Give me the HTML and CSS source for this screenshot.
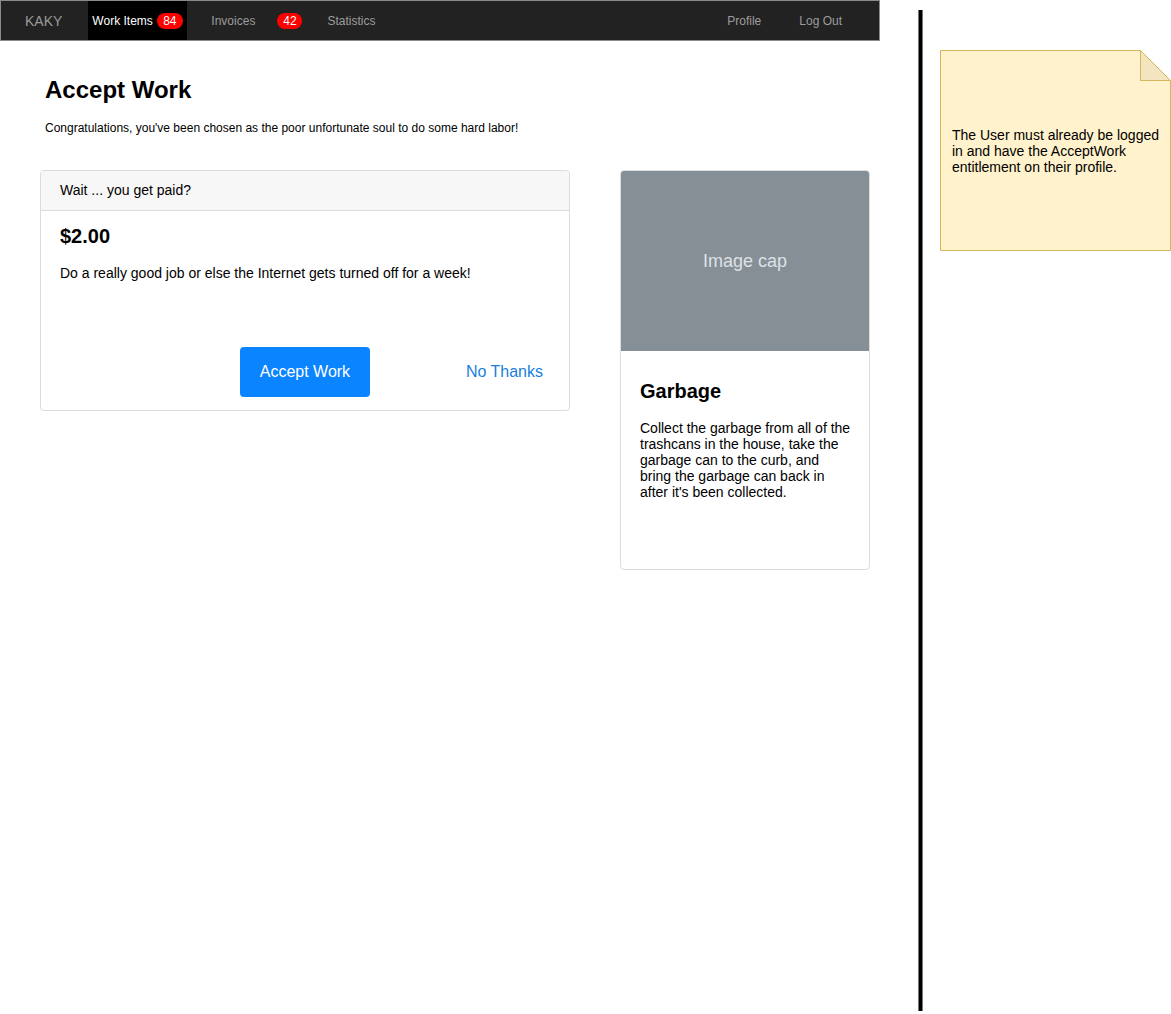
FILE: index.html
```html
<!DOCTYPE html>
<html>
<head>
<meta charset="utf-8">
<link rel="stylesheet" href="styles.css">
</head>
<body>
<div class="page">
  <div class="main">
    <nav class="navbar">
      <span class="brand">KAKY</span>
      <span class="nav-item active">Work Items <span class="badge">84</span></span>
      <span class="nav-item invoices">Invoices</span>
      <span class="badge badge-42">42</span>
      <span class="nav-item stats">Statistics</span>
      <span class="nav-spacer"></span>
      <span class="nav-item profile">Profile</span>
      <span class="nav-item logout">Log Out</span>
    </nav>
    <header class="page-head">
      <h1>Accept Work</h1>
      <p>Congratulations, you've been chosen as the poor unfortunate soul to do some hard labor!</p>
    </header>
    <div class="cards">
      <section class="card card-offer">
        <div class="card-header">Wait ... you get paid?</div>
        <div class="card-body">
          <h2>$2.00</h2>
          <p>Do a really good job or else the Internet gets turned off for a week!</p>
          <div class="actions">
            <button class="btn-primary">Accept Work</button>
            <button class="btn-link">No Thanks</button>
          </div>
        </div>
      </section>
      <section class="card card-task">
        <div class="img-cap">Image cap</div>
        <div class="task-body">
          <h2>Garbage</h2>
          <p>Collect the garbage from all of the trashcans in the house, take the garbage can to the curb, and<br>bring the garbage can back in<br>after it's been collected.</p>
        </div>
      </section>
    </div>
  </div>
  <div class="divider"></div>
  <div class="note">
    <svg class="note-shape" width="231" height="201" viewBox="0 0 231 201">
      <path d="M0.5 0.5 H200.5 L230.5 30.5 V200.5 H0.5 Z" fill="#fff2cc" stroke="#d6b656"/>
      <path d="M200.5 0.5 V30.5 H230.5 Z" fill="#f2e5c0" stroke="#d6b656"/>
    </svg>
    <p class="note-text">The User must already be logged in and have the AcceptWork entitlement on their profile.</p>
  </div>
</div>
</body>
</html>
```
FILE: styles.css
```css
* { box-sizing: border-box; }
body {
  margin: 0;
  font-family: "Liberation Sans", Arial, sans-serif;
  color: #000;
  background: #fff;
}
.page {
  display: flex;
  align-items: flex-start;
}
.main {
  width: 880px;
  flex: none;
}
.navbar {
  display: flex;
  align-items: center;
  height: 41px;
  background: #222;
  border: 1px solid #8a8a8a;
  font-size: 12px;
}
.brand {
  color: #9a9a9a;
  font-size: 14px;
  padding: 0 26px 0 24px;
}
.nav-item {
  color: #9d9d9d;
  display: flex;
  align-items: center;
  height: 100%;
}
.nav-item.active {
  background: #000;
  color: #fff;
  padding: 0 4px 0 4px;
  width: 99px;
  gap: 4px;
}
.badge {
  display: inline-block;
  background: #ff0000;
  color: #fff;
  border-radius: 9px;
  font-size: 12px;
  line-height: 16px;
  height: 16px;
  width: 26px;
  text-align: center;
}
.invoices { padding-left: 24px; }
.badge-42 { margin-left: 22px; width: 25px; }
.stats { padding-left: 25px; }
.nav-spacer { flex: 1; }
.profile { padding-right: 38px; }
.logout { padding-right: 37px; }

.page-head {
  padding: 35px 0 0 45px;
}
.page-head h1 {
  margin: 0;
  font-size: 24px;
  line-height: 28px;
  font-weight: bold;
}
.page-head p {
  margin: 17px 0 0;
  font-size: 12px;
  line-height: 14px;
}
.cards {
  display: flex;
  align-items: flex-start;
  gap: 50px;
  margin: 35px 0 0 40px;
}
.card {
  border: 1px solid #dcdcdc;
  border-radius: 4px;
  overflow: hidden;
  background: #fff;
}
.card-offer {
  width: 530px;
  height: 241px;
  display: flex;
  flex-direction: column;
}
.card-header {
  height: 40px;
  background: #f7f7f7;
  border-bottom: 1px solid #dcdcdc;
  font-size: 14px;
  line-height: 39px;
  padding-left: 19px;
}
.card-body {
  flex: 1;
  display: flex;
  flex-direction: column;
  padding: 13px 20px 13px 19px;
}
.card-body h2 {
  margin: 0;
  font-size: 20px;
  line-height: 24px;
  font-weight: bold;
}
.card-body p {
  margin: 17px 0 0;
  font-size: 14px;
  line-height: 16px;
}
.actions {
  margin-top: auto;
  display: flex;
  justify-content: flex-end;
  align-items: center;
}
.btn-primary {
  width: 130px;
  height: 50px;
  background: #0a84ff;
  color: #fff;
  border: 0;
  border-radius: 4px;
  font-family: inherit;
  font-size: 16px;
}
.btn-link {
  background: none;
  border: 0;
  color: #1a7fd9;
  font-family: inherit;
  font-size: 16px;
  height: 50px;
  padding: 0 6px 0 0;
  margin-left: 96px;
}
.card-task {
  width: 250px;
  height: 400px;
}
.img-cap {
  height: 180px;
  background: #868e96;
  color: #dee2e6;
  font-size: 18px;
  display: flex;
  align-items: center;
  justify-content: center;
}
.task-body {
  padding: 28px 12px 20px 19px;
}
.task-body h2 {
  margin: 0;
  font-size: 20px;
  line-height: 24px;
  font-weight: bold;
}
.task-body p {
  margin: 17px 0 0;
  font-size: 14px;
  line-height: 16px;
}
.divider {
  flex: none;
  width: 5px;
  height: 1001px;
  margin: 10px 0 0 38px;
  background: #000;
  border-left: 1px solid #777;
  border-right: 1px solid #777;
}
.note {
  flex: none;
  position: relative;
  width: 231px;
  height: 201px;
  margin: 50px 0 0 17px;
  display: flex;
  align-items: center;
  padding: 0 8px 0 12px;
}
.note-shape {
  position: absolute;
  left: 0;
  top: 0;
}
.note-text {
  position: relative;
  margin: 0;
  font-size: 14px;
  line-height: 16px;
}
```
